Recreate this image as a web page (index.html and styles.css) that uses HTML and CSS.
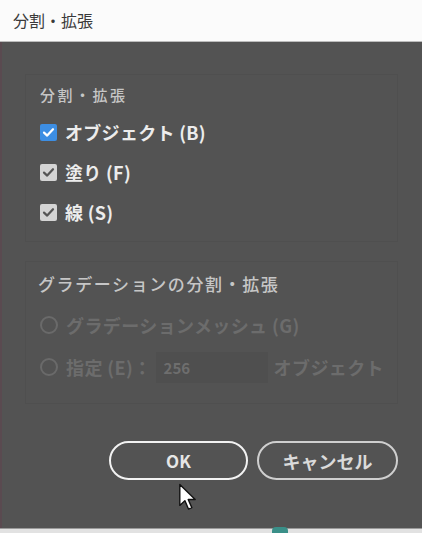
FILE: index.html
```html
<!DOCTYPE html>
<html lang="ja">
<head>
<meta charset="utf-8">
<link rel="stylesheet" href="styles.css">
</head>
<body>
<div class="titlebar">分割・拡張</div>
<div class="dialog">
  <div class="group group-expand">
    <div class="heading h1">分割・拡張</div>
    <div class="row"><span class="cb cb-blue"><svg viewBox="0 0 17 17"><path d="M4 8.6 L7.2 11.6 L13 5.2" fill="none" stroke="#fff" stroke-width="2.2" stroke-linecap="round" stroke-linejoin="round"/></svg></span><span class="label">オブジェクト (B)</span></div>
    <div class="row"><span class="cb cb-grey"><svg viewBox="0 0 17 17"><path d="M4 8.6 L7.2 11.6 L13 5.2" fill="none" stroke="#555" stroke-width="2.2" stroke-linecap="round" stroke-linejoin="round"/></svg></span><span class="label">塗り (F)</span></div>
    <div class="row"><span class="cb cb-grey"><svg viewBox="0 0 17 17"><path d="M4 8.6 L7.2 11.6 L13 5.2" fill="none" stroke="#555" stroke-width="2.2" stroke-linecap="round" stroke-linejoin="round"/></svg></span><span class="label">線 (S)</span></div>
  </div>
  <div class="group group-grad">
    <div class="heading h2">グラデーションの分割・拡張</div>
    <div class="row row-r"><span class="radio"></span><span class="dim">グラデーションメッシュ (G)</span></div>
    <div class="row row-r"><span class="radio"></span><span class="dim">指定 (E)：</span><span class="field">256</span><span class="dim">オブジェクト</span></div>
  </div>
  <div class="buttons">
    <button class="btn btn-ok">OK</button>
    <button class="btn btn-cancel">キャンセル</button>
  </div>
  <svg class="cursor" viewBox="0 0 13 20" width="19" height="28"><path d="M1 1 L1 16 L4.6 12.6 L7.2 18.6 L9.6 17.6 L7 11.8 L12 11.8 Z" fill="#fff" stroke="#111" stroke-width="1" stroke-linejoin="round"/></svg>
</div>
<div class="bottomstrip"><span class="blob"></span></div>
</body>
</html>
```
FILE: styles.css
```css
html, body {
  margin: 0;
  padding: 0;
}
body {
  width: 422px;
  height: 533px;
  overflow: hidden;
  background: #535353;
  font-family: "Noto Sans CJK JP", "Noto Sans", sans-serif;
}
.titlebar {
  height: 42px;
  line-height: 40px;
  background: #fbfbfb;
  color: #3a3a3a;
  font-size: 16px;
  padding-left: 13px;
  border-bottom: 1px solid #bcbcbc;
  box-sizing: border-box;
}
.dialog {
  position: relative;
  height: 486px;
  padding-top: 32px;
  box-sizing: border-box;
  background: #535353;
  border-left: 2px solid #5a4a50;
}
.group {
  margin-left: 23px;
  width: 373px;
  box-sizing: border-box;
  border: 1px solid #4f4f4f;
  padding-left: 14px;
}
.group-expand {
  height: 168px;
  padding-top: 10px;
}
.group-grad {
  margin-top: 19px;
  height: 143px;
  padding-top: 12px;
}
.heading {
  height: 20px;
  line-height: 20px;
  color: #c6c6c6;
  font-weight: 500;
}
.h1 {
  font-size: 15px;
  letter-spacing: 2.5px;
  margin-bottom: 7px;
}
.h2 {
  font-size: 17px;
  letter-spacing: 1.6px;
  margin-left: -2px;
  margin-bottom: 10px;
}
.row {
  display: flex;
  align-items: center;
  height: 40px;
  gap: 8px;
}
.row-r {
  height: 42px;
  gap: 8px;
}
.cb {
  width: 17px;
  height: 17px;
  border-radius: 2px;
  display: flex;
}
.cb svg {
  width: 17px;
  height: 17px;
}
.cb-blue {
  background: #3d8ee3;
}
.cb-grey {
  background: #d4d4d4;
}
.label {
  color: #ececec;
  font-size: 18px;
  font-weight: 700;
  letter-spacing: 0.3px;
}
.radio {
  width: 14px;
  height: 14px;
  border: 2px solid #6a6a6a;
  border-radius: 50%;
}
.dim {
  color: #6c6c6c;
  font-size: 18px;
  font-weight: 700;
  letter-spacing: 0.4px;
}
.field {
  width: 112px;
  height: 31px;
  line-height: 31px;
  box-sizing: border-box;
  padding-left: 8px;
  background: #4f4f4f;
  color: #6e6e6e;
  font-size: 15px;
  font-weight: 700;
  margin-left: -4px;
  margin-right: -2px;
}
.buttons {
  display: flex;
  gap: 9px;
  margin-top: 37px;
  margin-left: 107px;
}
.btn {
  height: 39px;
  border-radius: 20px;
  background: #535353;
  font-family: "Noto Sans CJK JP", "Noto Sans", sans-serif;
  font-size: 17px;
  font-weight: 700;
  padding: 0;
}
.btn-ok {
  width: 139px;
  border: 2.5px solid #f2f2f2;
  color: #e6e6e6;
}
.btn-cancel {
  width: 141px;
  border: 2px solid #cfcfcf;
  color: #dadada;
  font-size: 18px;
}
.cursor {
  position: absolute;
  left: 176px;
  top: 441px;
}
.bottomstrip {
  position: relative;
  height: 5px;
  background: #e2e2e2;
  border-top: 1px solid #9a9a9a;
}
.blob {
  position: absolute;
  left: 272px;
  top: -2px;
  width: 16px;
  height: 7px;
  background: #3a8f88;
  border-radius: 4px 4px 0 0;
}
```
